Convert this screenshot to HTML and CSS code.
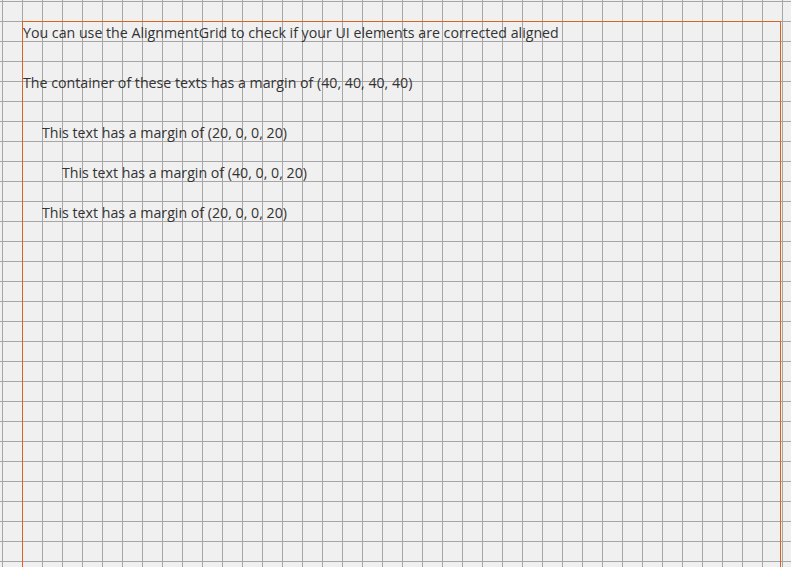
FILE: index.html
```html
<!DOCTYPE html>
<html>
<head>
<meta charset="utf-8">
<link rel="stylesheet" href="styles.css">
</head>
<body>
<div class="grid">
  <div class="frame">
    <p class="t t1">You can use the AlignmentGrid to check if your UI elements are corrected aligned</p>
    <p class="t t2">The container of these texts has a margin of (40, 40, 40, 40)</p>
    <p class="t t3">This text has a margin of (20, 0, 0, 20)</p>
    <p class="t t4">This text has a margin of (40, 0, 0, 20)</p>
    <p class="t t5">This text has a margin of (20, 0, 0, 20)</p>
  </div>
</div>
</body>
</html>
```

FILE: styles.css
```css
html, body {
  margin: 0;
  padding: 0;
  width: 791px;
  height: 567px;
  overflow: hidden;
  background: #f0f0f0;
}
.grid {
  width: 791px;
  height: 567px;
  padding-top: 21px;
  padding-left: 22px;
  box-sizing: border-box;
  overflow: hidden;
  background-color: #f0f0f0;
  background-image:
    linear-gradient(to right, #a6a6a6 1px, transparent 1px),
    linear-gradient(to bottom, #a6a6a6 1px, transparent 1px);
  background-size: 20px 20px;
  background-position: 2px 1px;
}
.frame {
  width: 759px;
  height: 560px;
  box-sizing: border-box;
  border: 1px solid #d8641e;
  border-bottom: none;
  padding-top: 1px;
}
.t {
  margin: 0;
  font-family: "Open Sans", "Noto Sans", sans-serif;
  font-size: 14.2px;
  line-height: 20px;
  color: #333333;
  white-space: nowrap;
}
.t2 { margin-top: 30px; }
.t3 { margin-top: 30px; margin-left: 19px; }
.t4 { margin-top: 20px; margin-left: 39px; }
.t5 { margin-top: 20px; margin-left: 19px; }
```
